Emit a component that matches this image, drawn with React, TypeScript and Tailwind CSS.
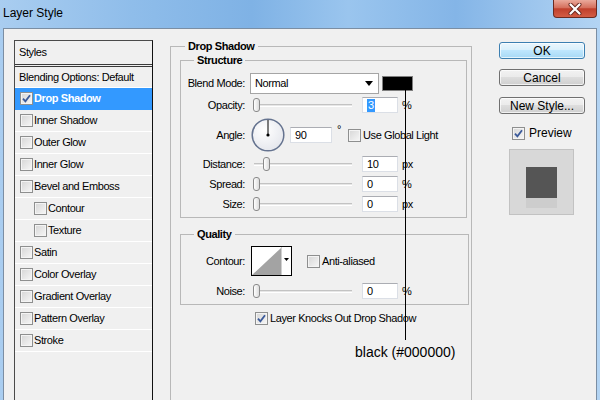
import React from 'react';

const font = "font-['Liberation_Sans',Arial,sans-serif]";

function Check({ checked = false }: { checked?: boolean }) {
  return (
    <span className="w-[13px] h-[13px] shrink-0 border border-[#8e8f8f] bg-[linear-gradient(135deg,#d6d6d6,#f7f7f7)] shadow-[inset_0_0_0_1px_#f4f4f4] flex items-center justify-center">
      {checked && (
        <svg width="9" height="9" viewBox="0 0 9 9">
          <path d="M1 4.6 L3.4 7.4 L8 1.2" fill="none" stroke="#3b5a9a" strokeWidth="1.8" />
        </svg>
      )}
    </span>
  );
}

function Slider({ pos }: { pos: number }) {
  return (
    <div className="relative w-[99px] h-[14px] shrink-0">
      <div className="absolute left-[1px] right-0 top-[6px] h-[3px] border-t border-[#c3c3c3] bg-[#e6e6e6] border-b border-b-white" />
      <div
        className="absolute top-0 w-[7px] h-[14px] rounded-[3px] border border-[#8a8a8a] bg-[linear-gradient(90deg,#ffffff,#dcdcdc)]"
        style={{ left: pos }}
      />
    </div>
  );
}

function Field({ value, w = 'w-[36px]', selected = false }: { value: string; w?: string; selected?: boolean }) {
  return (
    <div className={`${w} h-[16px] shrink-0 bg-white border border-[#dbdfe6] border-t-[#abadb3] flex items-center pl-[4px] leading-[13px]`}>
      {selected ? <span className="bg-[#3399ff] text-white px-[1px]">{value}</span> : value}
    </div>
  );
}

function Label({ children }: { children: React.ReactNode }) {
  return <span className="w-[64px] shrink-0 text-right">{children}</span>;
}

const styles: { name: string; sub?: boolean; checked?: boolean; active?: boolean }[] = [
  { name: 'Drop Shadow', checked: true, active: true },
  { name: 'Inner Shadow' },
  { name: 'Outer Glow' },
  { name: 'Inner Glow' },
  { name: 'Bevel and Emboss' },
  { name: 'Contour', sub: true },
  { name: 'Texture', sub: true },
  { name: 'Satin' },
  { name: 'Color Overlay' },
  { name: 'Gradient Overlay' },
  { name: 'Pattern Overlay' },
  { name: 'Stroke' },
];

export default function App() {
  return (
    <div
      className={`relative w-[600px] h-[400px] overflow-hidden flex flex-col bg-[linear-gradient(90deg,#a9cdf0_0%,#8fbdea_22%,#7fb2e5_42%,#9ac5ee_58%,#84b5e7_76%,#b3d4f3_100%)] ${font} text-[11px] tracking-[-0.4px] text-black`}
    >
      {/* title bar */}
      <div className="h-[28px] shrink-0 flex items-start">
        <span className="ml-[3px] mt-[6px] text-[12px] leading-[14px] tracking-normal">Layer Style</span>
        <div className="ml-auto mr-[3px] w-[44px] h-[18px] rounded-b-[4px] border border-t-0 border-[#6b2a20] bg-[linear-gradient(#eaa99b,#d5705d_45%,#c0402c_52%,#d35c44)] flex items-center justify-center">
          <svg width="14" height="12" viewBox="0 0 14 12">
            <path d="M2.5 1.5 L11.5 10.5 M11.5 1.5 L2.5 10.5" stroke="#6a2a22" strokeWidth="4" strokeLinecap="round" />
            <path d="M2.5 1.5 L11.5 10.5 M11.5 1.5 L2.5 10.5" stroke="#ffffff" strokeWidth="2.2" strokeLinecap="round" />
          </svg>
        </div>
      </div>

      {/* body */}
      <div className="flex-1 mx-[3px] bg-[#f0f0f0] border-t border-x border-[#7b8ea3] flex items-start pt-[11px]">
        {/* styles list */}
        <div className="ml-[10px] w-[139px] h-[400px] shrink-0 border border-[#4a4a4a] border-r-[#111]">
          <div className="h-[26px] pl-[4px] flex items-center border-b-[3px] border-double border-[#3a3a3a]">Styles</div>
          <div className="h-[21px] pl-[4px] flex items-center border-b border-white">Blending Options: Default</div>
          {styles.map((s) => (
            <div
              key={s.name}
              className={`h-[22px] flex items-center gap-[1px] border-b ${s.sub ? 'pl-[19px]' : 'pl-[5px]'} ${
                s.active ? 'bg-[#3399ff] border-[#3399ff] text-white font-bold' : 'border-white'
              }`}
            >
              <Check checked={s.checked} />
              <span>{s.name}</span>
            </div>
          ))}
        </div>

        {/* drop shadow */}
        <fieldset className="ml-[17px] w-[302px] h-[400px] shrink-0 border border-[#b8b8b8]">
          <legend className="ml-[14px] px-[3px] font-bold leading-[13px]">Drop Shadow</legend>

          <fieldset className="ml-[9px] mt-[1px] w-[287px] border border-[#b8b8b8] pb-[5px]">
            <legend className="ml-[13px] px-[3px] font-bold leading-[13px]">Structure</legend>

            <div className="mt-[6px] h-[21px] flex items-center">
              <Label>Blend Mode:</Label>
              <div className="ml-[5px] w-[129px] h-[21px] shrink-0 bg-white border border-[#a5a5a5] flex items-center pl-[4px]">
                <span>Normal</span>
                <svg className="ml-auto mr-[5px]" width="8" height="5" viewBox="0 0 8 5">
                  <path d="M0 0 H8 L4 5 Z" fill="#000" />
                </svg>
              </div>
              <div className="ml-[3px] w-[31px] h-[15px] shrink-0 border border-[#7f7f7f] bg-black" />
            </div>

            <div className="mt-[3px] h-[16px] flex items-center">
              <Label>Opacity:</Label>
              <div className="ml-[8px]"><Slider pos={0} /></div>
              <div className="ml-[10px]"><Field value="3" selected /></div>
              <span className="ml-[4px]">%</span>
            </div>

            <div className="mt-[5px] h-[34px] flex items-center">
              <Label>Angle:</Label>
              <svg className="ml-[6px] shrink-0" width="34" height="34" viewBox="0 0 34 34">
                <defs>
                  <radialGradient id="dial" cx="0.4" cy="0.35" r="0.7">
                    <stop offset="0" stopColor="#ffffff" />
                    <stop offset="1" stopColor="#e4e6ec" />
                  </radialGradient>
                </defs>
                <circle cx="17" cy="17" r="15.8" fill="url(#dial)" stroke="#65738f" strokeWidth="1.5" />
                <line x1="17" y1="17" x2="17" y2="2" stroke="#000" strokeWidth="1" />
                <circle cx="17" cy="17" r="1.6" fill="#000" />
              </svg>
              <div className="ml-[5px]"><Field value="90" w="w-[42px]" /></div>
              <span className="ml-[5px] self-start mt-[6px] leading-[10px]">°</span>
              <div className="ml-[7px]"><Check /></div>
              <span className="ml-[2px]">Use Global Light</span>
            </div>

            <div className="mt-[4px] h-[16px] flex items-center">
              <Label>Distance:</Label>
              <div className="ml-[8px]"><Slider pos={10} /></div>
              <div className="ml-[10px]"><Field value="10" /></div>
              <span className="ml-[4px]">px</span>
            </div>

            <div className="mt-[4px] h-[16px] flex items-center">
              <Label>Spread:</Label>
              <div className="ml-[8px]"><Slider pos={0} /></div>
              <div className="ml-[10px]"><Field value="0" /></div>
              <span className="ml-[4px]">%</span>
            </div>

            <div className="mt-[4px] h-[16px] flex items-center">
              <Label>Size:</Label>
              <div className="ml-[8px]"><Slider pos={0} /></div>
              <div className="ml-[10px]"><Field value="0" /></div>
              <span className="ml-[4px]">px</span>
            </div>
          </fieldset>

          <fieldset className="ml-[9px] mt-[10px] w-[289px] border border-[#b8b8b8] pb-[5px]">
            <legend className="ml-[13px] px-[3px] font-bold leading-[13px]">Quality</legend>

            <div className="mt-[5px] h-[30px] flex items-center">
              <Label>Contour:</Label>
              <svg className="ml-[6px] shrink-0" width="41" height="30" viewBox="0 0 41 30">
                <rect x="0.5" y="0.5" width="40" height="29" fill="#fff" stroke="#000" />
                <path d="M1 29 L30 2 L30 29 Z" fill="#a3a3a3" />
                <line x1="30.5" y1="1" x2="30.5" y2="29" stroke="#d0d0d0" />
                <path d="M33 12 H38 L35.5 15 Z" fill="#000" />
              </svg>
              <div className="ml-[15px]"><Check /></div>
              <span className="ml-[2px]">Anti-aliased</span>
            </div>

            <div className="mt-[7px] h-[16px] flex items-center">
              <Label>Noise:</Label>
              <div className="ml-[8px]"><Slider pos={0} /></div>
              <div className="ml-[10px]"><Field value="0" /></div>
              <span className="ml-[4px]">%</span>
            </div>
          </fieldset>

          <div className="mt-[5px] ml-[84px] flex items-center">
            <Check checked />
            <span className="ml-[2px]">Layer Knocks Out Drop Shadow</span>
          </div>
        </fieldset>

        {/* buttons */}
        <div className="ml-[27px] w-[86px] shrink-0 flex flex-col text-[12px] tracking-normal">
          <button className="mt-[2px] h-[17px] rounded-[3px] border border-[#3c7fb1] bg-[linear-gradient(#eaf6fd,#d9f0fc_45%,#bee6fd_50%,#a7d9f5)] shadow-[inset_0_0_0_1px_#ffffffb0] leading-[14px]">OK</button>
          <button className="mt-[10px] h-[17px] rounded-[3px] border border-[#707070] bg-[linear-gradient(#f2f2f2,#ebebeb_45%,#dddddd_50%,#cfcfcf)] shadow-[inset_0_0_0_1px_#ffffffb0] leading-[14px]">Cancel</button>
          <button className="mt-[11px] h-[17px] rounded-[3px] border border-[#707070] bg-[linear-gradient(#f2f2f2,#ebebeb_45%,#dddddd_50%,#cfcfcf)] shadow-[inset_0_0_0_1px_#ffffffb0] leading-[14px]">New Style...</button>
          <div className="mt-[10px] ml-[13px] flex items-center">
            <Check checked />
            <span className="ml-[4px]">Preview</span>
          </div>
          <div className="mt-[7px] ml-[10px] w-[65px] h-[66px] bg-[#d8d8d8] border border-[#c2c2c2] flex items-center justify-center">
            <div className="w-[31px] h-[31px] bg-[#555555] shadow-[0_10px_0_#cdcdcd]" />
          </div>
        </div>
      </div>

      {/* annotation */}
      <div className="absolute left-[405px] top-[90px] w-[1px] h-[250px] bg-black" />
      <span className="absolute left-[355px] top-[344px] text-[14px] tracking-normal leading-[16px]">black (#000000)</span>
    </div>
  );
}
